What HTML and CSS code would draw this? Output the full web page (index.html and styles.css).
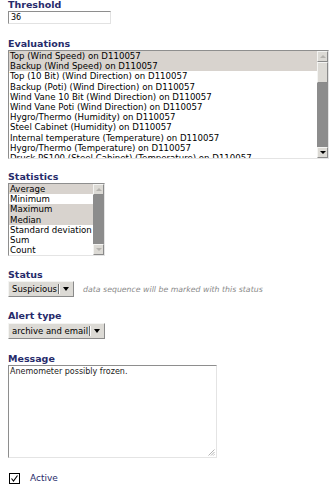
FILE: index.html
```html
<html lang="en">

<head>
<title>Alert rule</title>
<meta name="viewport" content="width=device-width, initial-scale=1">
<link rel="stylesheet" href="styles.css">
</head>

<body>

<div class="form">

  <div class="field f-threshold">
    <div class="label">Threshold</div>
    <div class="textbox">36</div>
  </div>

  <div class="field f-eval">
    <div class="label">Evaluations</div>
    <div class="listbox eval-list">
      <div class="items">
        <div class="item sel">Top (Wind Speed) on D110057</div>
        <div class="item sel">Backup (Wind Speed) on D110057</div>
        <div class="item">Top (10 Bit) (Wind Direction) on D110057</div>
        <div class="item">Backup (Poti) (Wind Direction) on D110057</div>
        <div class="item">Wind Vane 10 Bit (Wind Direction) on D110057</div>
        <div class="item">Wind Vane Poti (Wind Direction) on D110057</div>
        <div class="item">Hygro/Thermo (Humidity) on D110057</div>
        <div class="item">Steel Cabinet (Humidity) on D110057</div>
        <div class="item">Internal temperature (Temperature) on D110057</div>
        <div class="item">Hygro/Thermo (Temperature) on D110057</div>
        <div class="item">Druck PS100 (Steel Cabinet) (Temperature) on D110057</div>
      </div>
      <div class="scrollbar">
        <div class="sb-btn"><span class="arrow-up off"></span></div>
        <div class="sb-thumb"></div>
        <div class="sb-track"></div>
        <div class="sb-btn"><span class="arrow-down"></span></div>
      </div>
    </div>
  </div>

  <div class="field f-stats">
    <div class="label">Statistics</div>
    <div class="listbox stats-list">
      <div class="items">
        <div class="item sel">Average</div>
        <div class="item">Minimum</div>
        <div class="item sel">Maximum</div>
        <div class="item sel">Median</div>
        <div class="item">Standard deviation</div>
        <div class="item">Sum</div>
        <div class="item">Count</div>
      </div>
      <div class="scrollbar">
        <div class="sb-btn"><span class="arrow-up off"></span></div>
        <div class="sb-track"></div>
        <div class="sb-btn"><span class="arrow-down off"></span></div>
      </div>
    </div>
  </div>

  <div class="field f-status">
    <div class="label">Status</div>
    <div class="row">
      <div class="dropdown"><span class="dd-text">Suspicious</span><span class="dd-sep"></span><span class="dd-arrow"></span></div>
      <span class="hint">data sequence will be marked with this status</span>
    </div>
  </div>

  <div class="field f-alert">
    <div class="label">Alert type</div>
    <div class="row">
      <div class="dropdown"><span class="dd-text">archive and email</span><span class="dd-sep"></span><span class="dd-arrow"></span></div>
    </div>
  </div>

  <div class="field f-message">
    <div class="label">Message</div>
    <div class="textarea">Anemometer possibly frozen.
      <svg class="grip" width="7" height="7" viewBox="0 0 7 7">
        <line x1="6.5" y1="0.5" x2="0.5" y2="6.5" stroke="#a0a0a0" stroke-width="0.8"/>
        <line x1="6.5" y1="3" x2="3" y2="6.5" stroke="#a0a0a0" stroke-width="0.8"/>
        <line x1="6.5" y1="5.3" x2="5.3" y2="6.5" stroke="#a0a0a0" stroke-width="0.8"/>
      </svg>
    </div>
  </div>

  <div class="check-row">
    <svg class="checkbox" width="11" height="11" viewBox="0 0 11 11">
      <rect x="0.5" y="0.5" width="10" height="10" fill="#fff" stroke="#000" stroke-width="1"/>
      <path d="M2.5 5.5 L4.5 8 L8.5 2.5" fill="none" stroke="#000" stroke-width="1.1"/>
    </svg>
    <span class="check-label">Active</span>
  </div>

</div>

</body>
</html>
```

FILE: styles.css
```css
body {
  margin: 0;
  padding: 0 0 0 8px;
  background: #fff;
  font-family: "DejaVu Sans", Verdana, sans-serif;
  color: #000;
}

.form {
  display: flex;
  flex-direction: column;
}

.label {
  color: #272b6b;
  font-weight: bold;
  font-size: 9.5px;
  line-height: 10px;
  height: 10px;
  white-space: nowrap;
}

.f-threshold { margin-top: 0; }
.f-eval { margin-top: 15px; }
.f-stats { margin-top: 12.5px; }
.f-status { margin-top: 14px; }
.f-alert { margin-top: 13.5px; }
.f-message { margin-top: 15px; }

.textbox {
  box-sizing: border-box;
  margin-top: 1px;
  width: 103px;
  height: 13px;
  border: 1px solid;
  border-color: #8e8e8e #e2e2e2 #e2e2e2 #8e8e8e;
  font-size: 8px;
  line-height: 11px;
  padding-left: 2px;
}

/* list boxes */
.listbox {
  box-sizing: border-box;
  margin-top: 1px;
  display: flex;
  border: 1px solid;
  border-color: #8e8e8e #e4e4e4 #e4e4e4 #8e8e8e;
  overflow: hidden;
  background: #fff;
}

.eval-list {
  width: 321px;
  height: 109px;
}

.stats-list {
  width: 97px;
  height: 73px;
  margin-top: 1.5px;
}

.items {
  flex: 1;
  overflow: hidden;
}

.item {
  font-size: 8.6px;
  line-height: 10.2px;
  height: 10.2px;
  padding-left: 1px;
  white-space: nowrap;
}

.item.sel {
  background: #d8d3ce;
}

.scrollbar {
  width: 11px;
  display: flex;
  flex-direction: column;
  background: #8c8c8c;
}

.sb-btn {
  box-sizing: border-box;
  height: 11px;
  background: #dcdad5;
  border: 1px solid;
  border-color: #f4f4f2 #8a8a8a #8a8a8a #f4f4f2;
  display: flex;
  align-items: center;
  justify-content: center;
}

.sb-thumb {
  box-sizing: border-box;
  height: 21px;
  background: #dcdad5;
  border: 1px solid;
  border-color: #f4f4f2 #8a8a8a #8a8a8a #f4f4f2;
}

.sb-track {
  flex: 1;
}

.arrow-up {
  width: 0;
  height: 0;
  border-left: 3px solid transparent;
  border-right: 3px solid transparent;
  border-bottom: 3px solid #000;
}

.arrow-down {
  width: 0;
  height: 0;
  border-left: 3px solid transparent;
  border-right: 3px solid transparent;
  border-top: 3px solid #000;
}

.arrow-up.off { border-bottom-color: #b4b2ae; }
.arrow-down.off { border-top-color: #b4b2ae; }

/* dropdowns */
.row {
  display: flex;
  align-items: center;
  margin-top: 1px;
}

.f-alert .row { margin-top: 2px; }

.dropdown {
  box-sizing: border-box;
  height: 16px;
  display: flex;
  align-items: center;
  background: #dcdad5;
  border: 1px solid;
  border-color: #f4f4f2 #8a8a8a #8a8a8a #f4f4f2;
  padding: 0 4px 0 3px;
}

.dd-text {
  font-size: 8.5px;
  line-height: 14px;
  white-space: nowrap;
}

.dd-sep {
  width: 1px;
  height: 10px;
  background: #6e6e6e;
  border-right: 1px solid #fafafa;
  margin: 0 2px 0 1px;
}

.dd-arrow {
  width: 0;
  height: 0;
  border-left: 3px solid transparent;
  border-right: 3px solid transparent;
  border-top: 4px solid #000;
  margin-left: 1px;
}

.hint {
  margin-left: 9px;
  font-size: 7.8px;
  font-style: italic;
  color: #8a8a8a;
  white-space: nowrap;
}

/* textarea */
.textarea {
  position: relative;
  box-sizing: border-box;
  margin-top: 1px;
  width: 209px;
  height: 93px;
  border: 1px solid;
  border-color: #8e8e8e #e4e4e4 #e4e4e4 #8e8e8e;
  font-size: 8px;
  line-height: 10px;
  padding: 1px 1px;
  color: #222;
}

.grip {
  position: absolute;
  right: 1px;
  bottom: 1px;
}

/* checkbox */
.check-row {
  display: flex;
  align-items: center;
  margin-top: 15px;
  padding-left: 1px;
}

.check-label {
  margin-left: 10px;
  font-size: 9px;
  color: #272b6b;
}
```
